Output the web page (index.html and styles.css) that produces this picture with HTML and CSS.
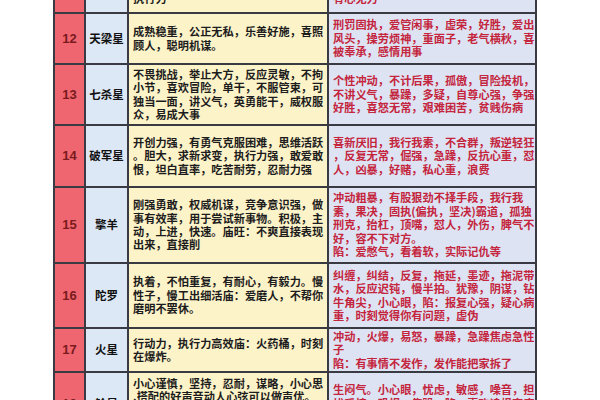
FILE: index.html
```html
<!DOCTYPE html>
<html lang="zh-CN">
<head>
<meta charset="utf-8">
<link rel="stylesheet" href="styles.css">
</head>
<body>
<div class="table">
  <div class="row r11">
    <div class="cell num"></div>
    <div class="cell name"></div>
    <div class="cell pos">稳重保守，有领导力，<br>执行力</div>
    <div class="cell neg">固执保守，缺乏开创，<br>有心无力</div>
  </div>
  <div class="row r12">
    <div class="cell num">12</div>
    <div class="cell name">天梁星</div>
    <div class="cell pos">成熟稳重，公正无私，乐善好施，喜照<br>顾人，聪明机谋。</div>
    <div class="cell neg">刑罚固执，爱管闲事，虚荣，好胜，爱出<br>风头，操劳烦神，重面子，老气横秋，喜<br>被奉承，感情用事</div>
  </div>
  <div class="row r13">
    <div class="cell num">13</div>
    <div class="cell name">七杀星</div>
    <div class="cell pos">不畏挑战，举止大方，反应灵敏，不拘<br>小节，喜欢冒险，单干，不服管束，可<br>独当一面，讲义气，英勇能干，威权服<br>众，易成大事</div>
    <div class="cell neg">个性冲动，不计后果，孤傲，冒险投机，<br>不讲义气，暴躁，多疑，自尊心强，争强<br>好胜，喜怒无常，艰难困苦，贫贱伤病</div>
  </div>
  <div class="row r14">
    <div class="cell num">14</div>
    <div class="cell name">破军星</div>
    <div class="cell pos">开创力强，有勇气克服困难，思维活跃<br>。胆大，求新求变，执行力强，敢爱敢<br>恨，坦白直率，吃苦耐劳，忍耐力强</div>
    <div class="cell neg">喜新厌旧，我行我素，不合群，叛逆轻狂<br>，反复无常，倔强，急躁，反抗心重，怼<br>人，凶暴，好赌，私心重，浪费</div>
  </div>
  <div class="row r15">
    <div class="cell num">15</div>
    <div class="cell name">擎羊</div>
    <div class="cell pos">刚强勇敢，权威机谋，竞争意识强，做<br>事有效率，用于尝试新事物。积极，主<br>动，上进，快速。庙旺：不爽直接表现<br>出来，直接削</div>
    <div class="cell neg">冲动粗暴，有股狠劲不择手段，我行我<br>素，果决，固执(偏执，坚决)霸道，孤独<br>刑克，抬杠，顶嘴，怼人，外伤，脾气不<br>好，容不下对方。<br>陷：爱憋气，看着软，实际记仇等</div>
  </div>
  <div class="row r16">
    <div class="cell num">16</div>
    <div class="cell name">陀罗</div>
    <div class="cell pos">执着，不怕重复，有耐心，有毅力。慢<br>性子，慢工出细活庙：爱磨人，不帮你<br>磨明不罢休。</div>
    <div class="cell neg">纠缠，纠结，反复，拖延，墨迹，拖泥带<br>水，反应迟钝，慢半拍。犹豫，阴谋，钻<br>牛角尖，小心眼，陷：报复心强，疑心病<br>重，时刻觉得你有问题，虚伪</div>
  </div>
  <div class="row r17">
    <div class="cell num">17</div>
    <div class="cell name">火星</div>
    <div class="cell pos">行动力，执行力高效庙：火药桶，时刻<br>在爆炸。</div>
    <div class="cell neg">冲动，火爆，易怒，暴躁，急躁焦虑急性<br>子<br>陷：有事情不发作，发作能把家拆了</div>
  </div>
  <div class="row r18">
    <div class="cell num">18</div>
    <div class="cell name">铃星</div>
    <div class="cell pos">小心谨慎，坚持，忍耐，谋略，小心思<br>.搭配的好声音动人心弦可以做声优。<br>庙：心思细腻，城府深，善于隐藏<br>陷：阴险狡诈</div>
    <div class="cell neg">生闷气。小心眼，忧虑，敏感，噪音，担<br>忧受惊，恐惧，焦躁，陷：喜欢追根究底<br>，报复心强</div>
  </div>
</div>
</body>
</html>
```

FILE: styles.css
```css
html, body {
  margin: 0;
  padding: 0;
  background: #ffffff;
}

body {
  width: 600px;
  height: 400px;
  overflow: hidden;
  font-family: "Noto Sans CJK SC", "Noto Sans", sans-serif;
}

.table {
  margin: -28px 0 0 53px;
  width: 484px;
  box-sizing: border-box;
  padding: 0 2px;
  background: #3a3b42;
  display: flex;
  flex-direction: column;
  gap: 2px;
}

.row {
  display: grid;
  grid-template-columns: 29px 41px 198px 206px;
  column-gap: 2px;
}

.r11 { height: 40px; }
.r12 { height: 49px; }
.r13 { height: 59px; }
.r14 { height: 60px; }
.r15 { height: 74px; }
.r16 { height: 63px; }
.r17 { height: 42px; }
.r18 { height: 61px; }

.cell {
  display: flex;
  align-items: center;
  overflow: hidden;
  white-space: nowrap;
  font-size: 11.2px;
  line-height: 13.4px;
  font-weight: 700;
}

.num {
  justify-content: center;
  background: #ef6670;
  color: #7a1a1c;
  font-family: "Liberation Sans", Arial, sans-serif;
  font-size: 13px;
}

.name {
  justify-content: center;
  background: #dde8f6;
  color: #111111;
  font-size: 11.5px;
}

.pos {
  background: #fdf3c9;
  color: #1c1c1c;
  padding-left: 4px;
}

.neg {
  background: #dde3f3;
  color: #c4253d;
  padding-left: 4px;
}
```
